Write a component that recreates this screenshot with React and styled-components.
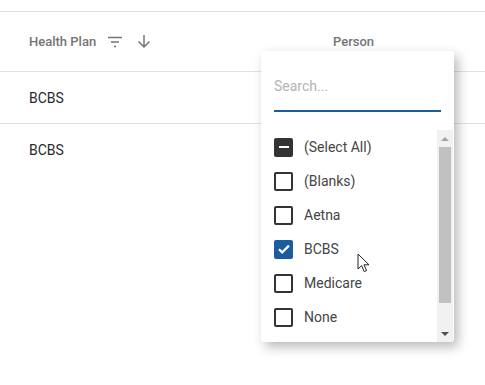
import React from 'react';
import styled, { createGlobalStyle } from 'styled-components';

const Global = createGlobalStyle`
  body {
    margin: 0;
    background: #fff;
    font-family: Roboto, "Liberation Sans", sans-serif;
  }
`;

const Page = styled.div`
  position: relative;
  width: 485px;
  height: 385px;
  overflow: hidden;
  padding-top: 11px;
  box-sizing: border-box;
`;

const Row = styled.div`
  display: grid;
  grid-template-columns: 304px 1fr;
  height: ${(p) => p.h}px;
  border-top: 1px solid #e2e2e2;
  box-sizing: border-box;
  &:last-child {
    border-bottom: 1px solid #e2e2e2;
  }
`;

const Cell = styled.div`
  display: flex;
  align-items: center;
  gap: 11px;
  padding-left: 29px;
  font-size: ${(p) => (p.head ? '13px' : '14px')};
  font-weight: ${(p) => (p.head ? 500 : 400)};
  color: ${(p) => (p.head ? '#757575' : '#2a2a2a')};
`;

const HeadIcons = styled.span`
  display: inline-flex;
  align-items: center;
  gap: 14px;
`;

const Popup = styled.div`
  position: absolute;
  left: 261px;
  top: 51px;
  width: 193px;
  height: 291px;
  background: #fff;
  border-radius: 3px;
  box-shadow: 4px 5px 12px rgba(0, 0, 0, 0.28);
  display: flex;
  flex-direction: column;
  overflow: hidden;
`;

const SearchWrap = styled.div`
  padding: 11px 13px 0 13px;
  height: 79px;
  box-sizing: border-box;
`;

const SearchInput = styled.input`
  width: 167px;
  height: 50px;
  box-sizing: border-box;
  border: none;
  border-bottom: 2px solid #1b5c9e;
  outline: none;
  padding: 0;
  font-family: Roboto, "Liberation Sans", sans-serif;
  font-size: 14px;
  color: #333;
  &::placeholder {
    color: #b3b3b3;
  }
`;

const ListArea = styled.div`
  flex: 1;
  display: flex;
  min-height: 0;
`;

const List = styled.div`
  flex: 1;
  overflow: hidden;
`;

const Item = styled.div`
  height: 34px;
  display: flex;
  align-items: center;
  padding-left: 13px;
  gap: 11px;
  font-size: 14px;
  color: #454545;
`;

const Box = styled.span`
  width: 19px;
  height: 19px;
  box-sizing: border-box;
  border-radius: 2px;
  border: 2px solid ${(p) => (p.checked ? '#1b5c9e' : '#333')};
  background: ${(p) => (p.checked ? '#1b5c9e' : p.mixed ? '#333' : '#fff')};
  display: flex;
  align-items: center;
  justify-content: center;
  flex-shrink: 0;
`;

const Dash = styled.span`
  width: 10px;
  height: 2.5px;
  background: #fff;
`;

const Scrollbar = styled.div`
  width: 16px;
  margin-right: 1px;
  background: #f1f1f1;
  display: flex;
  flex-direction: column;
  align-items: center;
`;

const Arrow = styled.div`
  height: 17px;
  display: flex;
  align-items: center;
  justify-content: center;
  flex-shrink: 0;
  &::after {
    content: '';
    border-left: 4px solid transparent;
    border-right: 4px solid transparent;
    ${(p) => (p.down ? 'border-top: 4px solid #505050;' : 'border-bottom: 4px solid #a3a3a3;')}
  }
`;

const Thumb = styled.div`
  width: 12px;
  height: 156px;
  background: #c1c1c1;
  flex-shrink: 0;
`;

const Spacer = styled.div`
  flex: 1;
`;

const Cursor = styled.svg`
  position: absolute;
  left: 357px;
  top: 253px;
`;

// last entry is scrolled mostly out of view, only its box top shows
const items = [
  { label: '(Select All)', mixed: true },
  { label: '(Blanks)' },
  { label: 'Aetna' },
  { label: 'BCBS', checked: true },
  { label: 'Medicare' },
  { label: 'None' },
  { label: '' },
];

const FilterIcon = () => (
  <svg width="16" height="12" viewBox="0 0 16 12">
    <path d="M1 1.5h14M4 6h8M7 10.5h2" stroke="#757575" strokeWidth="1.6" fill="none" />
  </svg>
);

const SortIcon = () => (
  <svg width="14" height="15" viewBox="0 0 14 15">
    <path d="M7 1v12M1.5 7.5L7 13l5.5-5.5" stroke="#757575" strokeWidth="1.5" fill="none" />
  </svg>
);

export default function App() {
  return (
    <Page>
      <Global />
      <Row h={60}>
        <Cell head>
          Health Plan
          <HeadIcons>
            <FilterIcon />
            <SortIcon />
          </HeadIcons>
        </Cell>
        <Cell head>Person</Cell>
      </Row>
      <Row h={52}>
        <Cell>BCBS</Cell>
        <Cell />
      </Row>
      <Row h={52}>
        <Cell>BCBS</Cell>
        <Cell />
      </Row>

      <Popup>
        <SearchWrap>
          <SearchInput placeholder="Search..." />
        </SearchWrap>
        <ListArea>
          <List>
            {items.map((it, i) => (
              <Item key={i}>
                <Box checked={it.checked} mixed={it.mixed}>
                  {it.mixed && <Dash />}
                  {it.checked && (
                    <svg width="14" height="14" viewBox="0 0 14 14">
                      <path d="M2 7.2l3.2 3.2L12 3.6" stroke="#fff" strokeWidth="2.2" fill="none" />
                    </svg>
                  )}
                </Box>
                {it.label}
              </Item>
            ))}
          </List>
          <Scrollbar>
            <Arrow />
            <Thumb />
            <Spacer />
            <Arrow down />
          </Scrollbar>
        </ListArea>
      </Popup>

      <Cursor width="14" height="21" viewBox="0 0 14 21">
        <path
          d="M1 1v15l3.6-3.4 2.6 6 2.4-1-2.6-5.8h5z"
          fill="#fff"
          stroke="#222"
          strokeWidth="1"
          strokeLinejoin="round"
        />
      </Cursor>
    </Page>
  );
}
